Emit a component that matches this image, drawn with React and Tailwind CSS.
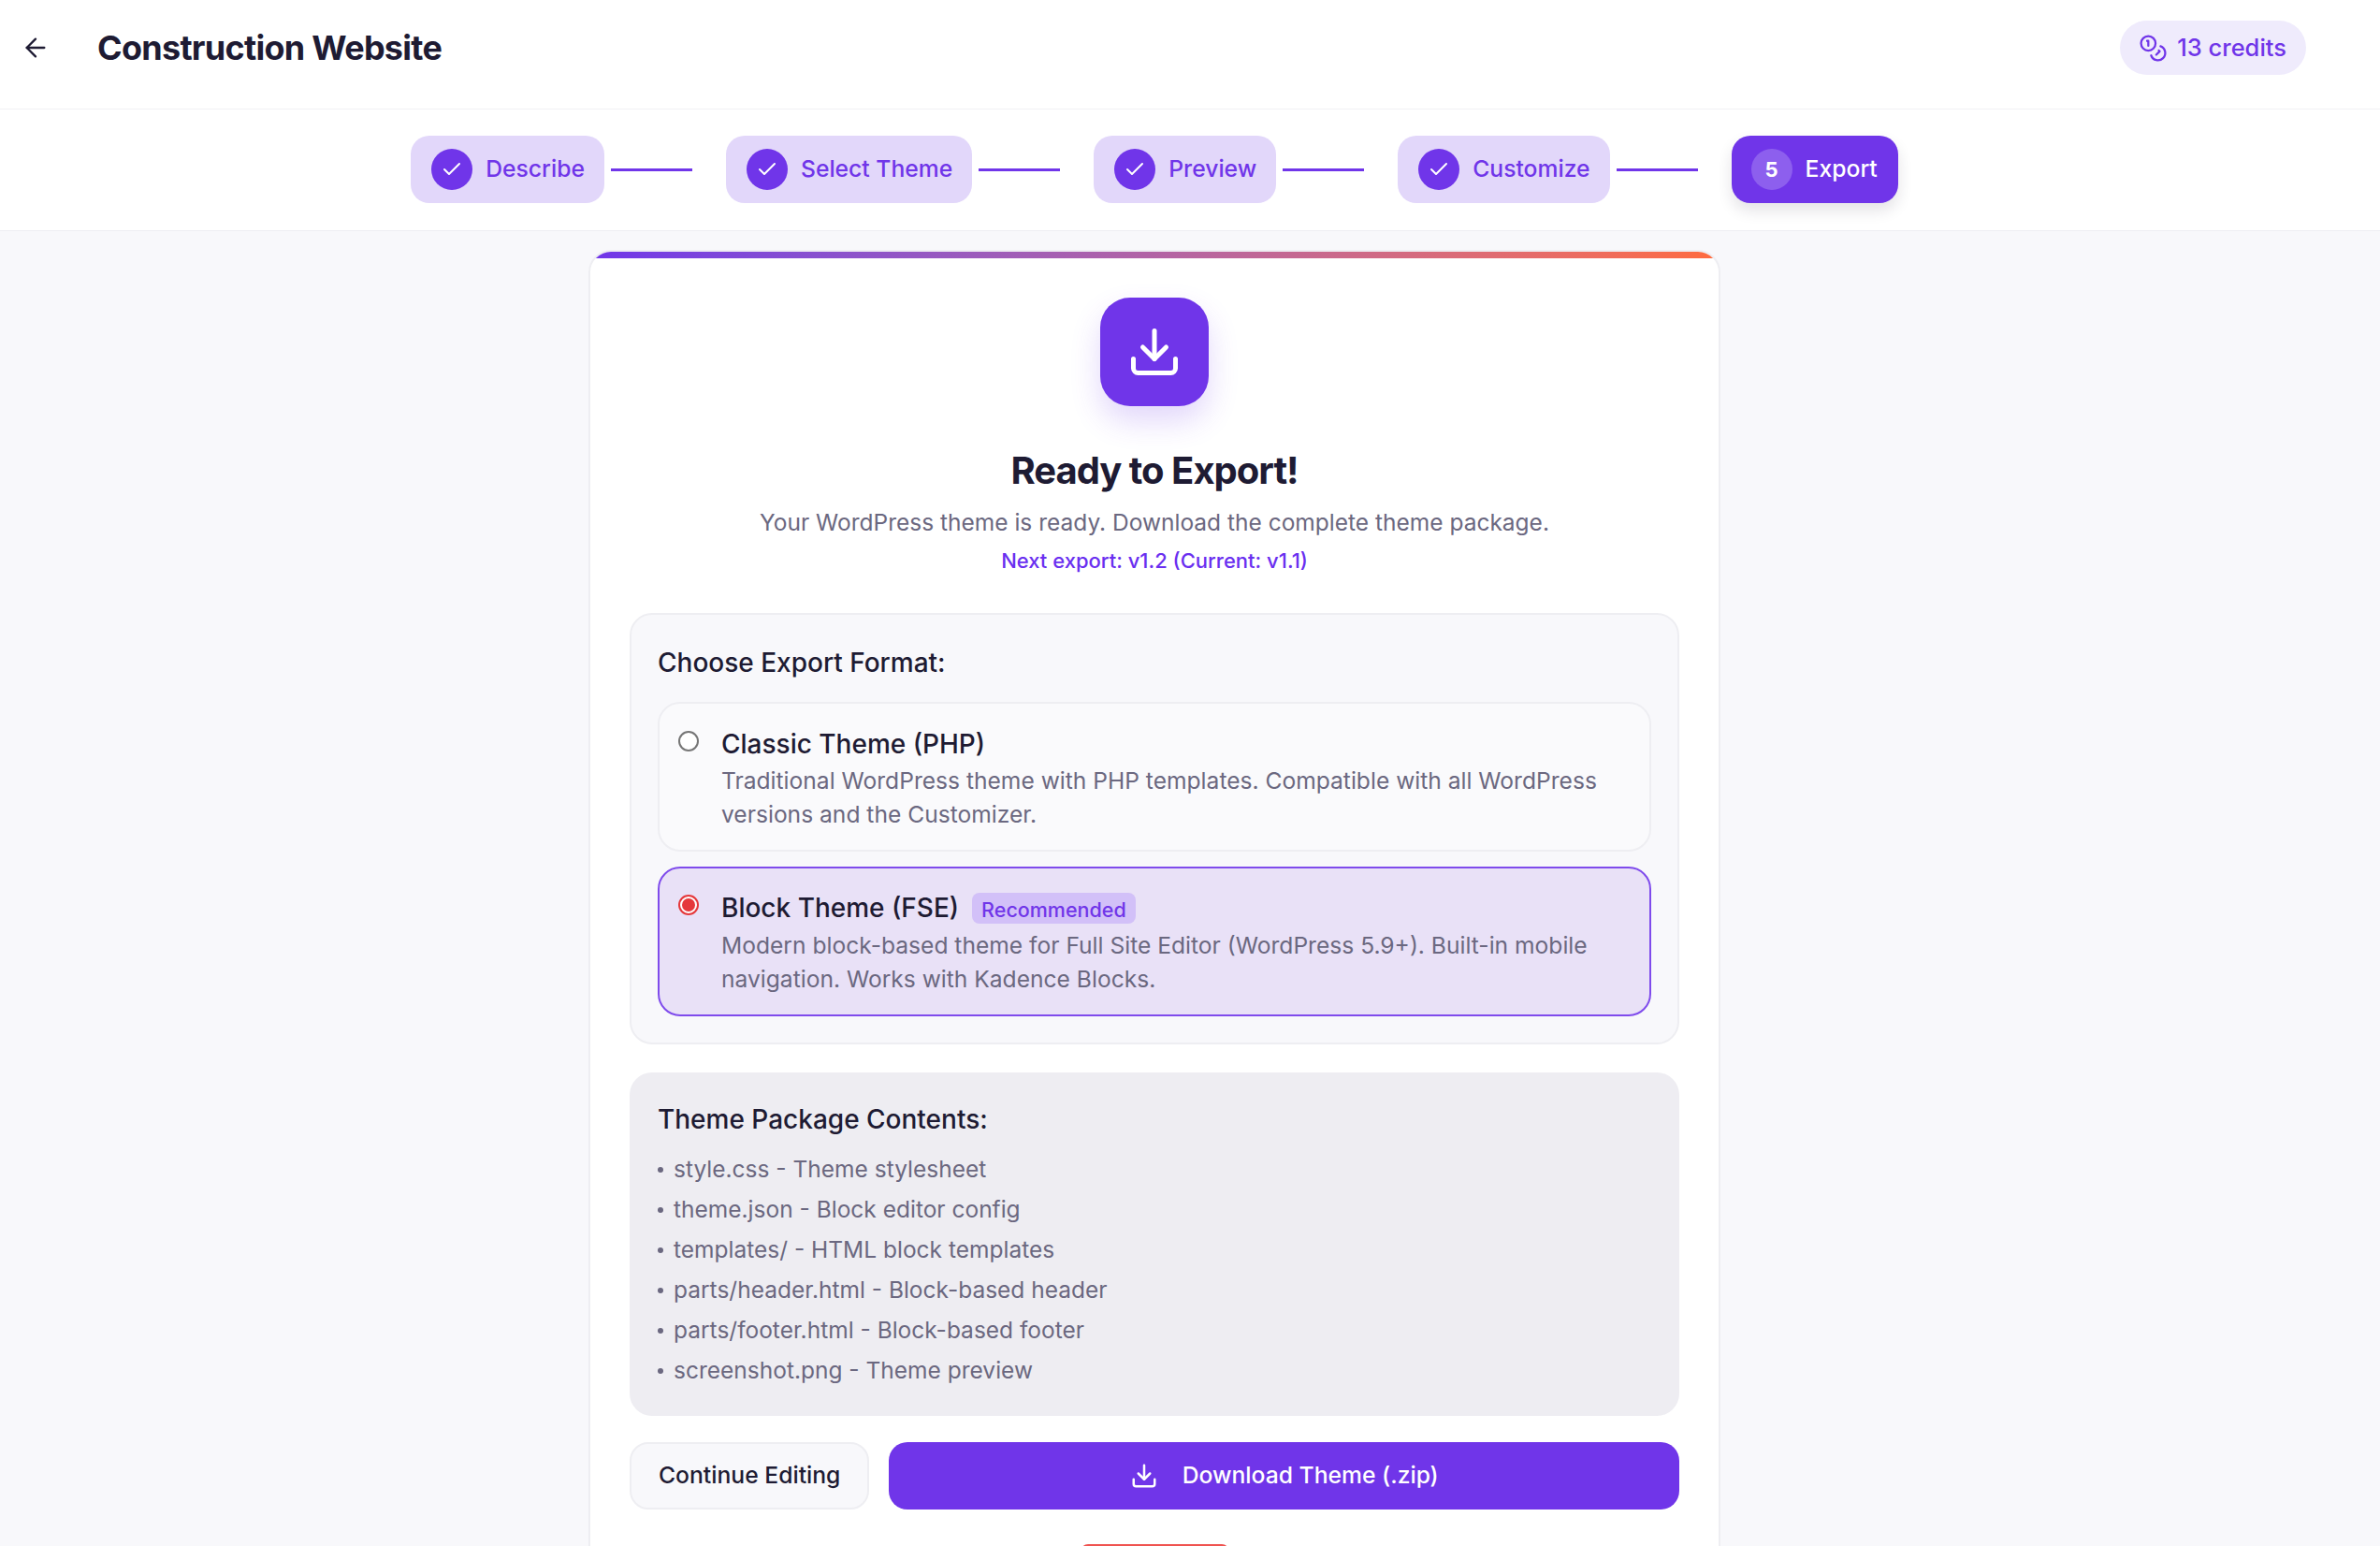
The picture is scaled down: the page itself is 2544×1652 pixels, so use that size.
import { ArrowLeft, Check, Coins, Download } from 'lucide-react'

const steps = [
  { label: 'Describe', line: true },
  { label: 'Select Theme', line: true },
  { label: 'Preview', line: true },
  { label: 'Customize', line: true },
  { label: 'Export', active: true, num: 5 },
]

const contents = [
  'style.css - Theme stylesheet',
  'theme.json - Block editor config',
  'templates/ - HTML block templates',
  'parts/header.html - Block-based header',
  'parts/footer.html - Block-based footer',
  'screenshot.png - Theme preview',
]

function Step({ step }) {
  if (step.active) {
    return (
      <div className="flex h-[72px] items-center gap-[14px] rounded-[20px] bg-[#7035e9] pl-[21px] pr-[22px] shadow-[0_8px_16px_rgba(30,27,51,0.12)]">
        <span className="flex h-[44px] w-[44px] items-center justify-center rounded-full bg-[#8d5fee] text-[22px] font-bold text-white">
          {step.num}
        </span>
        <span className="text-[24.7px] font-medium text-white">{step.label}</span>
      </div>
    )
  }
  return (
    <div className="flex h-[72px] items-center gap-[14px] rounded-[20px] bg-[#e2d7fa] pl-[22px] pr-[21px]">
      <span className="flex h-[44px] w-[44px] items-center justify-center rounded-full bg-[#7035e9] text-white">
        <Check size={24} strokeWidth={2} />
      </span>
      <span className="text-[24.7px] font-medium text-[#7035e9]">{step.label}</span>
    </div>
  )
}

export default function App() {
  return (
    <div className="h-[1652px] overflow-hidden bg-[#f8f8fb] font-['Inter',sans-serif] text-[#1e1b33]">
      {/* Header */}
      <header className="flex h-[117px] items-center justify-between border-b border-[#f1f1f4] bg-white pb-[14px] pl-[22px] pr-[79px]">
        <div className="flex items-center gap-[50px]">
          <ArrowLeft size={32} strokeWidth={1.75} />
          <h1 className="text-[36px] font-bold tracking-[-0.02em]">Construction Website</h1>
        </div>
        <div className="flex h-[58px] items-center gap-[10px] rounded-full bg-[#efebfc] pl-[20px] pr-[21px] text-[25.5px] font-medium text-[#7035e9]">
          <Coins size={31} strokeWidth={1.75} />
          13 credits
        </div>
      </header>

      {/* Stepper */}
      <div className="flex h-[130px] items-start justify-center border-b border-[#eeeef2] bg-white pr-[76px] pt-[28px]">
        {steps.map((s) => (
          <div key={s.label} className="flex items-center">
            <Step step={s} />
            {s.line && <div className="ml-[7px] mr-[36px] h-[3px] w-[87px] bg-[#7035e9]" />}
          </div>
        ))}
      </div>

      {/* Export card */}
      <div className="pr-[76px]">
        <main className="mx-auto mt-[20px] w-[1210px] overflow-hidden rounded-[24px] border-2 border-[#eeeef2] bg-white">
          <div className="h-[7px] bg-gradient-to-r from-[#7035e9] to-[#ff6b3d]" />
          <div className="flex flex-col items-center px-[42px] pt-[42px]">
            <div className="flex h-[116px] w-[116px] items-center justify-center rounded-[32px] bg-[#7035e9] text-white shadow-[0_16px_32px_rgba(112,53,233,0.2)]">
              <Download size={60} strokeWidth={2} />
            </div>
            <h2 className="mt-[41px] text-[40px] font-bold leading-[56px] tracking-[-0.025em]">Ready to Export!</h2>
            <p className="mt-[7px] text-[24.5px] leading-[40px] text-[#6b6880]">
              Your WordPress theme is ready. Download the complete theme package.
            </p>
            <p className="mt-[3px] text-[22px] font-[450] leading-[36px] text-[#6a2ff0]">Next export: v1.2 (Current: v1.1)</p>

            {/* Format picker */}
            <div className="mt-[38px] w-full rounded-[24px] border-2 border-[#eeeef2] bg-[#f8f8fb] px-[28px] pb-[28px] pt-[29px]">
              <h3 className="text-[28px] font-medium leading-[44px]">Choose Export Format:</h3>
              <div className="mt-[20px] flex min-h-[160px] gap-[24px] rounded-[24px] border-2 border-[#eeeef2] bg-[#fafafc] px-[20px] pb-[20px] pt-[21px]">
                <span className="mt-[8px] h-[22px] w-[22px] shrink-0 rounded-full border-2 border-[#767676] bg-white" />
                <div>
                  <div className="-mb-[2px] text-[28px] font-medium leading-[45px]">Classic Theme (PHP)</div>
                  <p className="text-[24.6px] leading-[36px] text-[#6b6880]">
                    Traditional WordPress theme with PHP templates. Compatible with all WordPress versions and the Customizer.
                  </p>
                </div>
              </div>
              <div className="mt-[16px] flex min-h-[160px] gap-[24px] rounded-[24px] border-2 border-[#7f4bec] bg-[#e9e1f7] px-[20px] py-[20px]">
                <span className="mt-[8px] flex h-[22px] w-[22px] shrink-0 items-center justify-center rounded-full border-2 border-[#e5383b] bg-white">
                  <span className="h-[14px] w-[14px] rounded-full bg-[#e5383b]" />
                </span>
                <div>
                  <div className="flex items-center gap-[14px]">
                    <span className="text-[28px] font-medium leading-[44px]">Block Theme (FSE)</span>
                    <span className="rounded-[8px] bg-[#d2c0f8] px-[10px] pt-[4px] text-[21.5px] font-[450] leading-[29px] text-[#7035e9]">
                      Recommended
                    </span>
                  </div>
                  <p className="text-[24.6px] leading-[36px] text-[#6b6880]">
                    Modern block-based theme for Full Site Editor (WordPress 5.9+). Built-in mobile navigation. Works with Kadence Blocks.
                  </p>
                </div>
              </div>
            </div>

            {/* Package contents */}
            <div className="mt-[30px] w-full rounded-[24px] bg-[#eeedf2] px-[30px] pb-[27px] pt-[28px]">
              <h3 className="text-[28px] font-medium leading-[44px]">Theme Package Contents:</h3>
              <ul className="mt-[10px] text-[24.5px] leading-[43px] text-[#6b6880]">
                {contents.map((c) => (
                  <li key={c} className="flex items-center">
                    <span className="mr-[11px] h-[6px] w-[6px] rounded-full bg-[#6b6880]" />
                    {c}
                  </li>
                ))}
              </ul>
            </div>

            {/* Actions */}
            <div className="mt-[28px] flex w-full gap-[21px]">
              <button className="h-[72px] rounded-[20px] border-2 border-[#eeeef2] bg-[#f8f8fb] px-[29px] text-[24.7px] font-medium">
                Continue Editing
              </button>
              <button className="flex h-[72px] flex-1 items-center justify-center gap-[26px] rounded-[20px] bg-[#7035e9] text-[24.7px] font-medium text-white">
                <Download size={30} strokeWidth={2} />
                Download Theme (.zip)
              </button>
            </div>
            <div className="mt-[37px] h-[40px] w-[159px] rounded-t-[8px] bg-[#ef5350]" />
          </div>
        </main>
      </div>
    </div>
  )
}
